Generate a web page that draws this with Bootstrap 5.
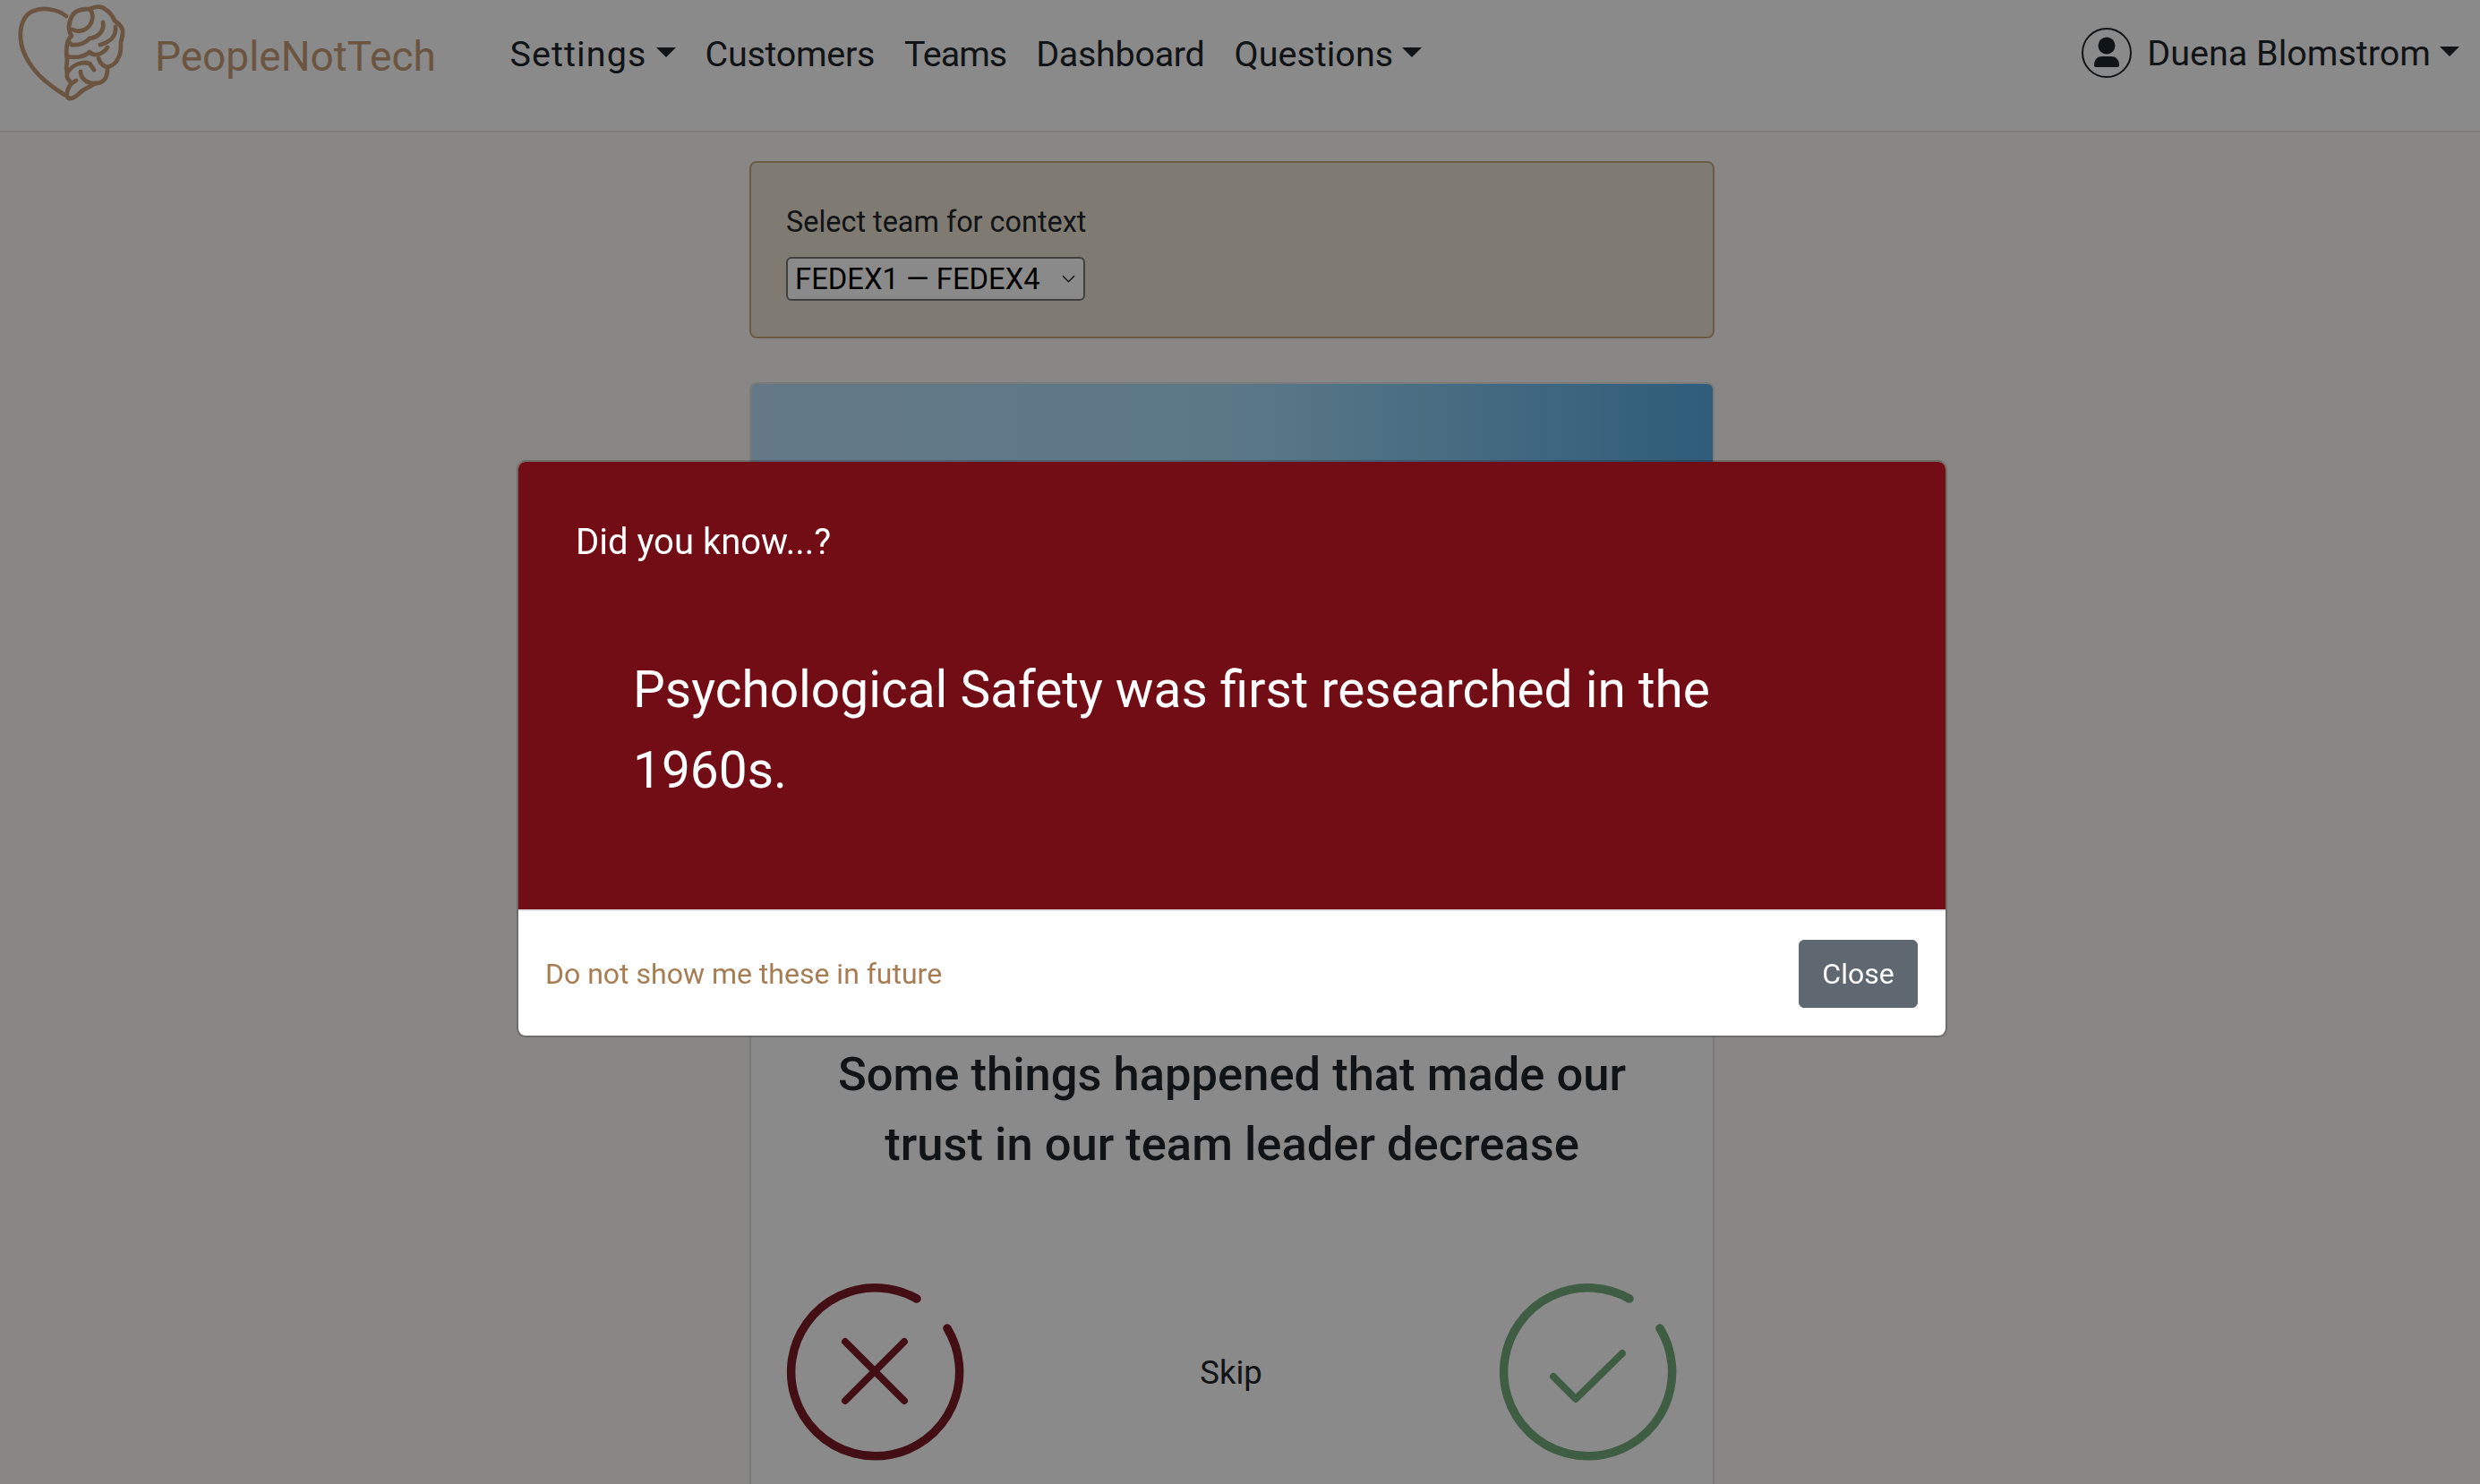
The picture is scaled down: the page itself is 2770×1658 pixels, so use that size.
<!DOCTYPE html>
<html lang="en">
<head>
  <meta charset="UTF-8">
  <title>PeopleNotTech</title>
  <link href="https://cdn.jsdelivr.net/npm/bootstrap@5.3.0/dist/css/bootstrap.min.css" rel="stylesheet">
  <style>
    html, body { height: 100%; }
    body {
      font-family: Roboto, "Liberation Sans", sans-serif;
      color: #212529;
      background: #fcfaf5;
      overflow: hidden;
    }
    .main-bar {
      height: 148px;
      padding: 0 23px 0 0;
      background: #fff;
      border-bottom: 2px solid #e7e7e7;
      align-items: flex-start;
    }
    .main-bar .navbar-brand { display: flex; padding: 0; margin: 0; }
    .brand-logo { width: 160px; height: 130px; }
    .brand-name { font-size: 46px; line-height: 54px; color: #c69d76; margin: 36px 0 0 13px; }
    .main-bar .navbar-nav { margin: 34px 0 0 66px; }
    .main-bar .navbar-nav .nav-link { font-size: 39.5px; line-height: 54px; padding: 0 16.5px; color: #212529; }
    /* the reference face is a bit wider on some words, narrower on others */
    .main-bar .nav-item:nth-child(1) .nav-link { letter-spacing: 1.1px; }
    .main-bar .nav-item:nth-child(2) .nav-link { letter-spacing: -.3px; }
    .main-bar .nav-item:nth-child(3) .nav-link { letter-spacing: -1px; }
    .main-bar .nav-item:nth-child(4) .nav-link { letter-spacing: -.3px; }
    .user-box { margin-top: 33px; gap: 17px; font-size: 39.5px; line-height: 54px; }
    .user-box svg { width: 56px; height: 56px; margin-top: -2px; }
    .page-wrap { padding-right: 18px; }
    .page-col { width: 1078px; margin: 0 auto; }
    .context-box {
      margin-top: 32px;
      height: 198px;
      padding: 46px 39px;
      background: #ebe4d2;
      border: 2px solid #c9a67f;
      border-radius: 8px;
    }
    .context-box label { display: block; font-size: 32.4px; line-height: 40px; margin-bottom: 19px; }
    .context-box select {
      appearance: none;
      display: block;
      width: 334px; height: 49px;
      font: 32.8px Roboto, "Liberation Sans", sans-serif;
      color: #000;
      padding: 0 8px;
      border: 2px solid #777;
      border-radius: 6px;
      background: #fff url("data:image/svg+xml,%3Csvg xmlns='http://www.w3.org/2000/svg' viewBox='0 0 14 8'%3E%3Cpath d='M1 1l6 6 6-6' fill='none' stroke='%23222' stroke-width='1.3'/%3E%3C/svg%3E") no-repeat right 9px center / 15px 9px;
    }
    .question-card {
      margin-top: 49px;
      height: 1300px;
      background: #fff;
      border: 2px solid #e4e4e4;
      border-radius: 8px;
      overflow: hidden;
    }
    .question-head { height: 500px; background: linear-gradient(90deg, #b9def8, #aadefa 50%, #57ace2); }
    .question-text { margin: 232px 0 0; font-size: 52.5px; font-weight: 500; line-height: 78px; text-align: center; padding: 0 80px; }
    .answer-row { padding: 115px 40px 0 38px; align-items: center; justify-content: space-between; }
    .answer-row svg { width: 200px; height: 200px; }
    .answer-row span { font-size: 36.5px; margin-top: 4px; }
    .dim-layer { background: #000; opacity: .46; }
    .tip-modal { padding-right: 18px; }
    .tip-dialog { width: 1598px; max-width: none; margin: 514px auto 0; }
    .tip-dialog .modal-content { border-radius: 10px; overflow: hidden; border: 2px solid rgba(0,0,0,.2); }
    .tip-body { height: 500px; background: #720c15; color: #fff; padding: 66px 64px 0; }
    .tip-body h5 { font-size: 40px; line-height: 48px; font-weight: 400; margin: 0 0 96px; }
    .tip-body p { font-size: 56.8px; line-height: 90px; margin: 0 64px; }
    .tip-foot { height: 141px; padding: 0 31px 0 30px; border-top: 2px solid #dee2e6; }
    .tip-foot a { font-size: 32px; color: #a67c52; text-decoration: none; }
    .tip-foot .btn { width: 133px; height: 76px; padding: 0; font-size: 32px; background: #5f6870; border-color: #5f6870; border-radius: 6px; }
  </style>
</head>
<body>
  <nav class="navbar navbar-expand flex-nowrap justify-content-start main-bar">
    <a class="navbar-brand" href="#">
      <svg class="brand-logo" viewBox="0 0 160 130" fill="none" stroke="#c69d76" stroke-width="4.8" stroke-linecap="round" stroke-linejoin="round">
        <path d="M74 18C64 10 48 8 38 12C26 16 22 30 23 43C24 60 36 78 50 90C58 97 66 102 72 106"/>
        <path d="M80 40C74 32 78 18 85 13C90 10 95 10 100 10C108 7 114 7 117 10C122 13 126 18 128 23C134 27 138 32 137 37C137 43 134 47 135 50C135 58 134 62 132 65C130 70 125 74 120 75C120 81 119 85 118 87C115 92 111 93 107 93C102 96 94 99 90 103C86 107 82 110 78 110C75 110 74 106 75 103C76 99 78 95 80 93C76 89 74 85 75 83C74 78 74 72 75 67C74 60 74 54 75 50C75 46 77 43 80 40Z"/>
        <path d="M81 33C88 37 100 34 103 22C104 17 103 14 101 11"/>
        <path d="M115 25C117 36 108 42 100 43C96 48 88 51 80 50L76 46"/>
        <path d="M112 50C122 47 130 42 129 30"/>
        <path d="M76 63C84 65 94 64 100 58C104 63 114 62 120 53"/>
        <path d="M110 65C112 72 116 74 120 75"/>
        <path d="M76 80C82 72 92 68 100 71L105 78"/>
        <path d="M90 80C90 88 98 94 107 93"/>
        <path d="M80 93L85 90"/>
      </svg>
      <span class="brand-name">PeopleNotTech</span>
    </a>
    <ul class="navbar-nav">
      <li class="nav-item"><a class="nav-link dropdown-toggle" href="#">Settings</a></li>
      <li class="nav-item"><a class="nav-link" href="#">Customers</a></li>
      <li class="nav-item"><a class="nav-link" href="#">Teams</a></li>
      <li class="nav-item"><a class="nav-link" href="#">Dashboard</a></li>
      <li class="nav-item"><a class="nav-link dropdown-toggle" href="#">Questions</a></li>
    </ul>
    <div class="user-box d-flex align-items-center ms-auto">
      <svg viewBox="0 0 56 56" fill="none">
        <circle cx="28" cy="28" r="27" stroke="#212529" stroke-width="2"/>
        <circle cx="28" cy="20" r="9.5" fill="#212529"/>
        <path d="M14 42c0-7 4-10 9-10h10c5 0 9 3 9 10 0 1-1 2-2 2H16c-1 0-2-1-2-2z" fill="#212529"/>
      </svg>
      <span class="dropdown-toggle">Duena Blomstrom</span>
    </div>
  </nav>

  <div class="page-wrap">
    <main class="page-col">
      <div class="context-box">
        <label for="teamPick">Select team for context</label>
        <select id="teamPick"><option>FEDEX1 — FEDEX4</option></select>
      </div>
      <div class="question-card">
        <div class="question-head"></div>
        <p class="question-text">Some things happened that made our trust in our team leader decrease</p>
        <div class="answer-row d-flex">
          <svg viewBox="0 0 200 200" fill="none" stroke="#7c1c25" stroke-width="9.5" stroke-linecap="round">
            <path d="M147 19A94 94 0 1 0 181 52"/>
            <path d="M67 67L133 133M133 67L67 133" stroke-width="8"/>
          </svg>
          <span>Skip</span>
          <svg viewBox="0 0 200 200" fill="none" stroke="#73ac7c" stroke-width="9.5" stroke-linecap="round">
            <path d="M147 19A94 94 0 1 0 181 52"/>
            <path d="M62 106L87 131L139 80" stroke-width="8" stroke-linejoin="round"/>
          </svg>
        </div>
      </div>
    </main>
  </div>

  <div class="modal-backdrop dim-layer"></div>
  <div class="modal d-block tip-modal">
    <div class="modal-dialog tip-dialog">
      <div class="modal-content">
        <div class="tip-body">
          <h5>Did you know...?</h5>
          <p>Psychological Safety was first researched in the 1960s.</p>
        </div>
        <div class="tip-foot d-flex justify-content-between align-items-center">
          <a href="#">Do not show me these in future</a>
          <button type="button" class="btn btn-secondary">Close</button>
        </div>
      </div>
    </div>
  </div>
  <script src="https://cdn.jsdelivr.net/npm/bootstrap@5.3.0/dist/js/bootstrap.bundle.min.js"></script>
</body>
</html>
